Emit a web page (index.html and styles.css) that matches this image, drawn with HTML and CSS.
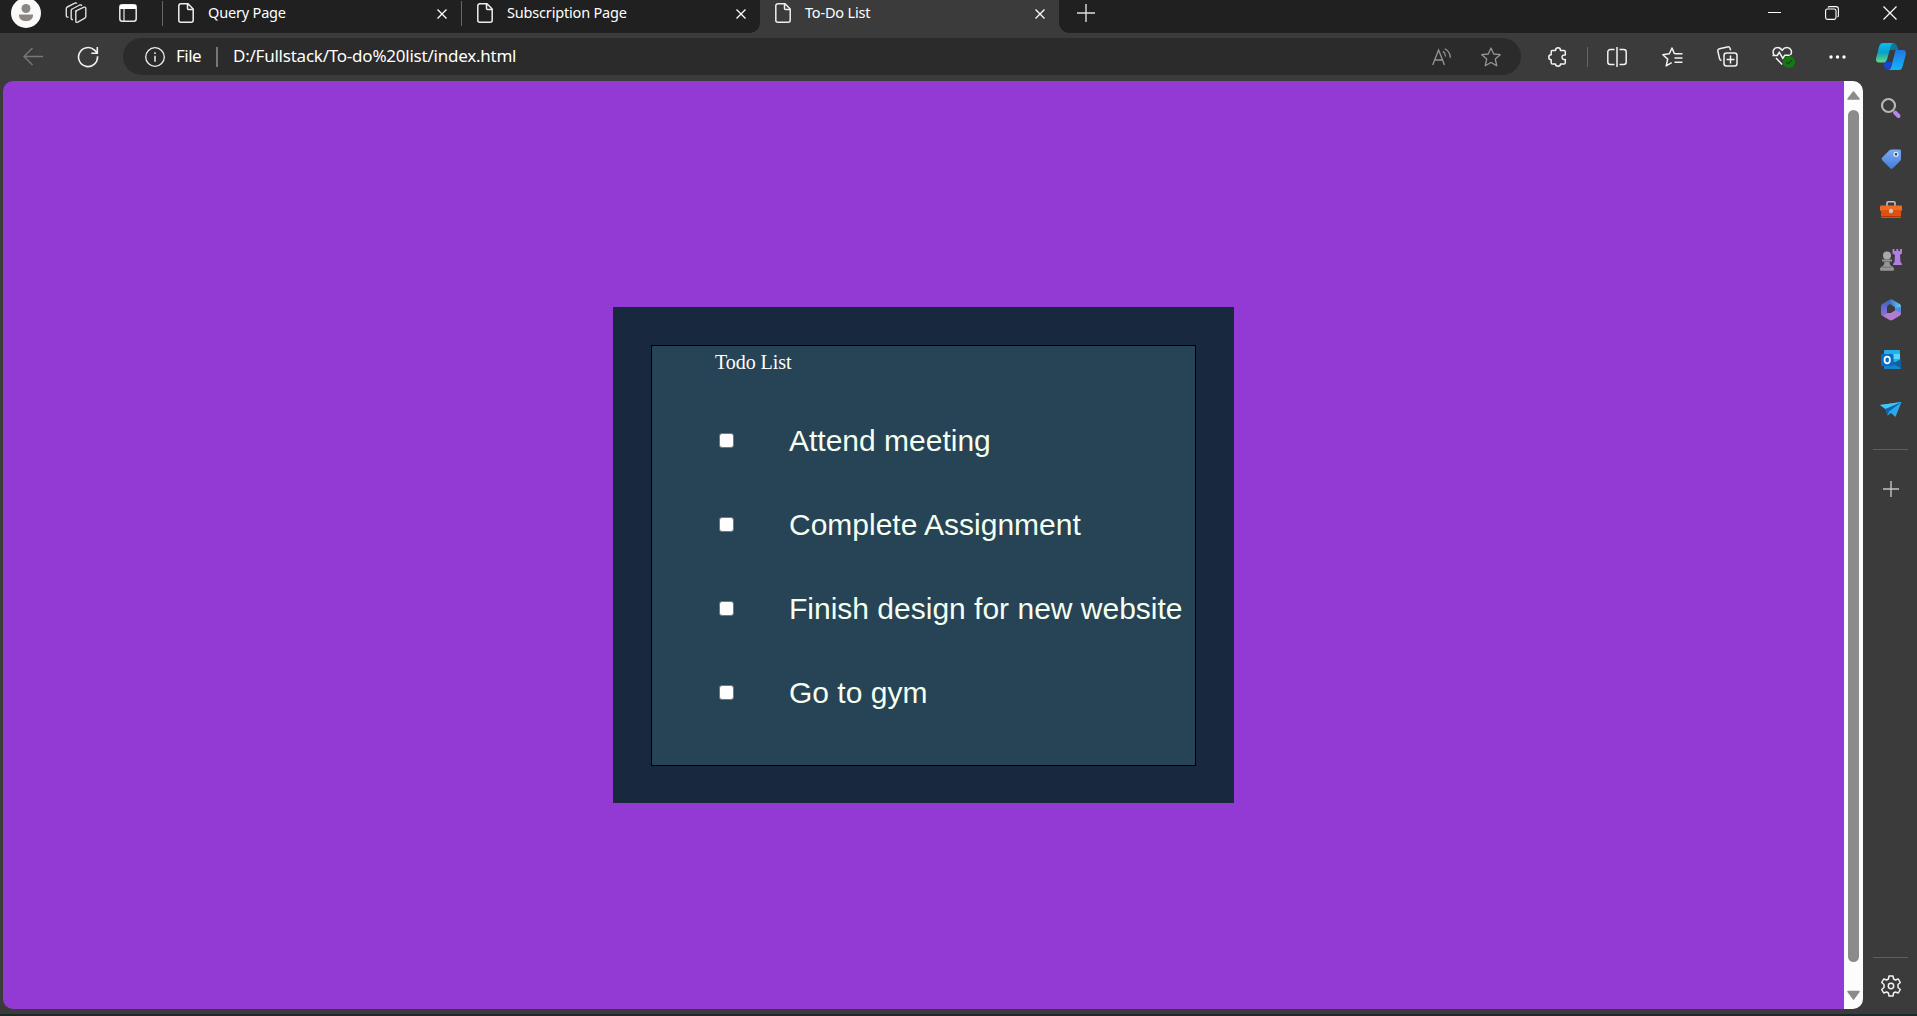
FILE: index.html
```html
<!DOCTYPE html>
<html lang="en">
<head>
<meta charset="utf-8">
<title>To-Do List</title>
<link rel="stylesheet" href="styles.css">
</head>
<body>
<div class="browser">
  <header class="tabbar">
    <svg class="avatar" width="30" height="30" viewBox="0 0 30 30"><circle cx="15" cy="15" r="15" fill="#fafafa"/><circle cx="15" cy="10.500" r="4.500" fill="#8b8682"/><path d="M8 16.500h14v1.200c0 3-3 5.300-7 5.300s-7-2.300-7-5.300z" fill="#8b8682"/></svg>
    <svg class="workspaces" width="22" height="22" viewBox="0 0 22 22" fill="none" stroke="#dedede" stroke-width="1.400" stroke-linejoin="round"><path d="M10.500 9.200 19 5.200q1.800-.5 1.800 1.200v8.200q0 1-1 1.500l-7 4q-2 .9-2-1v-8.600q0-.9.700-1.300z"/><path d="M8 17.500q-1.800.3-1.800-1.300V8.500q0-1 1-1.500l7.500-4q1.800-.6 1.900 1"/><path d="M3.500 15Q1.300 15.500 1.300 13.800V6.500q0-1 1-1.500l7.500-3.800q1.500-.5 1.900.6"/></svg>
    <svg class="tab-actions" width="18" height="18" viewBox="0 0 18 18"><rect x=".8" y=".8" width="16.400" height="16.400" rx="2.500" fill="none" stroke="#e8e8e8" stroke-width="1.500"/><path d="M1 1h16v4H1z" fill="#fff"/><path d="M5 5v12" stroke="#e8e8e8" stroke-width="1.200"/></svg>
    <i class="tab-line first"></i>
    <div class="tab">
      <svg class="doc" width="16" height="20" viewBox="0 0 16 20"><path d="M3 .8h7l5.200 5.200v11.200a2 2 0 0 1-2 2H2.800a2 2 0 0 1-2-2V2.800a2 2 0 0 1 2-2zM9.500 1v4.500q0 1 1 1H15"/></svg>
      <span class="tab-title">Query Page</span>
      <svg class="x" width="10" height="10" viewBox="0 0 10 10"><path d="M.5.500l9 9m0-9l-9 9"/></svg>
      <i class="tab-line"></i>
    </div>
    <div class="tab second">
      <svg class="doc" width="16" height="20" viewBox="0 0 16 20"><path d="M3 .8h7l5.200 5.200v11.200a2 2 0 0 1-2 2H2.800a2 2 0 0 1-2-2V2.800a2 2 0 0 1 2-2zM9.500 1v4.500q0 1 1 1H15"/></svg>
      <span class="tab-title">Subscription Page</span>
      <svg class="x" width="10" height="10" viewBox="0 0 10 10"><path d="M.5.500l9 9m0-9l-9 9"/></svg>
    </div>
    <div class="tab active">
      <svg class="doc" width="16" height="20" viewBox="0 0 16 20"><path d="M3 .8h7l5.200 5.200v11.200a2 2 0 0 1-2 2H2.800a2 2 0 0 1-2-2V2.800a2 2 0 0 1 2-2zM9.500 1v4.500q0 1 1 1H15"/></svg>
      <span class="tab-title">To-Do List</span>
      <svg class="x" width="10" height="10" viewBox="0 0 10 10"><path d="M.5.500l9 9m0-9l-9 9"/></svg>
    </div>
    <svg class="new-tab" width="18" height="18" viewBox="0 0 18 18"><path d="M0 9h18M9 0v18" stroke="#ddd" stroke-width="1.400"/></svg>
    <div class="window-controls">
      <svg width="13" height="13" viewBox="0 0 13 13"><path d="M0 6.500h13" stroke="#fff"/></svg>
      <svg width="14" height="14" viewBox="0 0 14 14" fill="none" stroke="#fff" stroke-width="1.100"><rect x=".6" y="3" width="10.400" height="10.400" rx="1.800"/><path d="M3 1.500Q3.500.600 4.500.600h6.500q2.400 0 2.400 2.400v6.500q0 1-.9 1.500"/></svg>
      <svg width="14" height="14" viewBox="0 0 14 14"><path d="M.5.500l13 13m0-13l-13 13" stroke="#fff" stroke-width="1.200"/></svg>
    </div>
  </header>

  <nav class="toolbar">
    <svg class="back" width="20" height="20" viewBox="0 0 20 20" fill="none" stroke="#777" stroke-width="1.400"><path d="M20 9.500H1M9.500 1 1 9.500l8.500 8.500"/></svg>
    <svg class="reload" width="22" height="22" viewBox="0 0 22 22" fill="none" stroke="#f2f2f2" stroke-width="1.600"><path d="M20.500 10.200a9.500 9.500 0 1 1-3-6.100l3 2.900M20.300 1v6.200h-6"/></svg>
    <div class="address">
      <svg width="20" height="20" viewBox="0 0 20 20" fill="none" stroke="#eee" stroke-width="1.300"><circle cx="10" cy="10" r="9.300"/><path d="M10 8.700v6M10 5.200v1.700" stroke-width="1.500"/></svg>
      <span class="scheme">File</span>
      <i class="url-line"></i>
      <span class="url">D:/Fullstack/To-do%20list/index.html</span>
      <svg class="read" width="20" height="18" viewBox="0 0 20 18" fill="none" stroke="#979797" stroke-width="1.300"><path d="M.7 17 6.600 2l5.900 15M2.800 12h7.700M11 3.200q2.500 2 2.500 5.300M12.800.7q5.500 3 5.500 9"/></svg>
      <svg class="star" width="20" height="20" viewBox="0 0 20 20" fill="none" stroke="#969696" stroke-width="1.300" stroke-linejoin="round"><path d="M10 1l2.700 6 6.500.7-4.900 4.400 1.500 6.700L10 15.500l-5.800 3.300 1.500-6.700L.8 7.700l6.500-.7z"/></svg>
    </div>
    <svg class="puzzle" width="19" height="20" viewBox="0 0 19 20" fill="none" stroke="#f2f2f2" stroke-width="1.500" stroke-linejoin="round"><path d="M4 3.500h3.500C7.500 2 8.200.8 10 .8s2.500 1.200 2.500 2.700H16q1.300 0 1.300 1.300V8c-2-.2-3.300.5-3.300 2.200s1.300 2.400 3.300 2.200v3.300q0 1.300-1.300 1.300h-3.500c0 1.400-.9 2.200-2.500 2.200S7.500 18.400 7.500 17H4.500q-1.300 0-1.300-1.300v-3C1.600 12.700.8 11.800.8 10.200s.8-2.500 2.400-2.500V4.800Q3.200 3.500 4 3.500z"/></svg>
    <i class="tool-line"></i>
    <svg class="split" width="20" height="20" viewBox="0 0 20 20" fill="none" stroke="#f2f2f2" stroke-width="1.500"><path d="M7.500 2.500H3.300A2.500 2.500 0 0 0 .8 5v10a2.500 2.500 0 0 0 2.500 2.500h4.200M12.500 2.500h4.200A2.500 2.500 0 0 1 19.200 5v10a2.500 2.500 0 0 1-2.500 2.500h-4.200M10 0v20"/></svg>
    <svg class="favs" width="21" height="20" viewBox="0 0 21 20" fill="none" stroke="#f2f2f2" stroke-width="1.500" stroke-linejoin="round"><path d="M13.500 6.700 12.300 6.500 10 1 7.300 6.800.8 7.700l4.900 4.400-1.500 6.700 5.500-3.100M13.500 6.700H20.500M12.500 11h8M12.500 15.300h8"/></svg>
    <svg class="collections" width="21" height="21" viewBox="0 0 21 21" fill="none" stroke="#f2f2f2" stroke-width="1.500"><rect x="7" y="7" width="13" height="13" rx="2.500"/><path d="M13.500 9.500v8M9.500 13.500h8M4.500 14.500q-1.500-.2-1.900-1.700L.9 5.300q-.4-2 1.500-2.500l8-1.900q2-.4 2.700 1.500l.5 2"/></svg>
    <svg class="health" width="23" height="22" viewBox="0 0 23 22"><path d="M2 9C-.2 5 2 1.600 5.500 1.600c2.300 0 3.800 1.400 4.700 2.700.9-1.300 2.400-2.700 4.700-2.700C18.500 1.600 20.800 5 18.500 9M.5 9.500h4.800l2-3.200 3.500 6 2-3h5M4 12l6.200 6.500" fill="none" stroke="#f2f2f2" stroke-width="1.500"/><circle cx="17" cy="16" r="6" fill="#107c10"/><path d="M14.300 16l2 2 3.700-4" fill="none" stroke="#263d25" stroke-width="1.200"/></svg>
    <svg class="dots" width="17" height="4" viewBox="0 0 17 4" fill="#fff"><circle cx="2" cy="2" r="1.700"/><circle cx="8.500" cy="2" r="1.700"/><circle cx="15" cy="2" r="1.700"/></svg>
    <svg class="copilot" width="30" height="27" viewBox="0 0 30 27">
      <defs><linearGradient id="ca" x2="0" y2="1"><stop stop-color="#09bdf4"/><stop offset=".5" stop-color="#0c9fc4"/><stop offset="1" stop-color="#62de7f"/></linearGradient><linearGradient id="cb" x2="0" y2="1"><stop stop-color="#2474e5"/><stop offset="1" stop-color="#12b5f8"/></linearGradient></defs>
      <path d="M7 19h9l-2 7.500H12c-3 0-4-3-5-7.500z" fill="#1746d0"/><path d="M15 0h2c3 0 4 2.500 5.500 7H14z" fill="#087b9c"/>
      <path d="M7 0h11c-2 0-3 1.500-3.500 4l-3 11c-.8 3-2 4.500-4.500 4.500H3c-2.500 0-3.500-1.500-2.800-4.500L3 4C3.700 1.500 5 0 7 0z" fill="url(#ca)"/>
      <path d="M20.500 7H27c2.500 0 3.300 2 2.700 5l-2.900 10.500C26.100 25.500 25 27 23 27H12c2 0 2.800-1.500 3.500-4l3-11.500C19.200 8.500 19 7 20.500 7z" fill="url(#cb)"/>
    </svg>
  </nav>

  <div class="body">
    <div class="viewport">
      <main class="page">
        <section class="card">
          <div class="panel">
            <div class="heading">Todo List</div>
            <label class="item"><input type="checkbox"><span>Attend meeting</span></label>
            <label class="item"><input type="checkbox"><span>Complete Assignment</span></label>
            <label class="item"><input type="checkbox"><span>Finish design for new website</span></label>
            <label class="item"><input type="checkbox"><span>Go to gym</span></label>
          </div>
        </section>
      </main>
      <div class="scrollbar">
        <svg width="13" height="9" viewBox="0 0 13 9"><path d="M6.500 1 12 8H1z" fill="#8b8b8b" stroke="#8b8b8b" stroke-width="1.500" stroke-linejoin="round"/></svg>
        <div class="thumb"></div>
        <svg width="13" height="10" viewBox="0 0 13 10"><path d="M6.500 9 12 1.500H1z" fill="#8b8b8b" stroke="#8b8b8b" stroke-width="1.500" stroke-linejoin="round"/></svg>
      </div>
    </div>
    <aside class="sidebar">
      <svg class="s1" width="22" height="22" viewBox="0 0 22 22"><circle cx="8.500" cy="8.500" r="6.500" fill="none" stroke="#b9b6b3" stroke-width="2.200"/><path d="M15 15.500l3.500 3.500" stroke="#bb83ee" stroke-width="4" stroke-linecap="round"/></svg>
      <svg class="s2" width="22" height="22" viewBox="0 0 22 22"><defs><linearGradient id="tg" x2="0" y2="1"><stop stop-color="#78abf3"/><stop offset="1" stop-color="#477cd9"/></linearGradient></defs><path d="M11.500 1.500h8q1.500 0 1.500 1.500v8q0 1-.7 1.700l-7.500 7.500q-1.300 1.300-2.600 0l-8-8q-1.300-1.300 0-2.600l7.500-7.500q.8-.6 1.800-.6z" fill="url(#tg)"/><circle cx="16" cy="6.300" r="1.900" fill="#293b58" stroke="#dceaff" stroke-width="1.300"/></svg>
      <svg class="s3" width="22" height="22" viewBox="0 0 22 22"><path d="M7 7V4q0-1.200 1.200-1.200h5.600Q15 2.800 15 4v3" fill="none" stroke="#bfc3c5" stroke-width="1.600"/><rect y="6.500" width="22" height="5.500" rx="1" fill="#f36a25"/><path d="M1 11h20v7q0 1-1 1H2q-1 0-1-1z" fill="#e2500f"/><path d="M1 17.500h20" stroke="#b53605"/><circle cx="11" cy="12" r="2.200" fill="#c4c7c8"/></svg>
      <svg class="s4" width="22" height="22" viewBox="0 0 22 22"><path d="M12.500 0h2v2h1.800V0h2v2h1.700V0h2v4.500l-2 1.500.5 7q1.500 1 1.500 3h-9q0-2 1.500-3l.5-7-2.500-1.500z" fill="#b07ee2"/><circle cx="7" cy="6.500" r="4" fill="#a9a9a9"/><path d="M2 10.500h10v2H9.500q0 3 1.500 4.500 3 .8 3 3.500 0 1.200-1 1.200H1q-1 0-1-1.200Q0 18 3 17q1.500-1.500 1.500-4.500H2z" fill="#959595"/><path d="M4 12.500h6M2 18.200h10" stroke="#737373"/></svg>
      <svg class="s5" width="22" height="22" viewBox="0 0 22 22"><defs><linearGradient id="ma" x2="0" y2="1"><stop stop-color="#3f63bf"/><stop offset="1" stop-color="#8d70dd"/></linearGradient><linearGradient id="mb" x2="1"><stop stop-color="#4070c4"/><stop offset="1" stop-color="#63cdf8"/></linearGradient></defs><path d="M9.500.8 2.300 5.100Q1 6 1 7.500v7q0 1.500 1.200 2.200L7 14V8q0-1.200 1-1.800l5-3z" fill="url(#ma)"/><path d="M9.500.8q1.500-.9 3 0l7.200 4.300Q21 6 21 7.500v7L15 11V9q0-1-1-1.600L9.500 4.500z" fill="url(#mb)"/><path d="M2.200 16.700 7 14h3.500l7.500-4.500 3 2v3q0 1.500-1.300 2.200l-7.200 4.400q-1.500.9-3 0z" fill="#b47bd0"/><path d="M15 9.500l6-2v5q0 1.500-1.500 1L15 11z" fill="#4b8be0"/><path d="M10.500 6.800 14 8.500q1 .6 1 1.700v1L10.500 14H7.500V8.500z" fill="#3b3b3b"/></svg>
      <svg class="s6" width="22" height="22" viewBox="0 0 22 22"><path d="M5 1h14q1 0 1 1v11H4V2q0-1 1-1z" fill="#25aee8"/><path d="M12 5h8v5h-8z" fill="#50d9ff"/><path d="M4 10l8 5 9-5v9q0 1-1 1H5q-1 0-1-1z" fill="#1684cd"/><path d="M13 15l8-5v9z" fill="#105e9f"/><rect x="1" y="5" width="12.500" height="12" rx="1" fill="#086bc4"/><ellipse cx="7.200" cy="11" rx="2.700" ry="3.300" fill="none" stroke="#fff" stroke-width="1.700"/></svg>
      <svg class="s7" width="22" height="22" viewBox="0 0 22 22"><path d="M0 6 21.500 3 15.500 18 11 14 7.500 16.500 5.500 10z" fill="#28a9e9"/><path d="M0 6 21.500 3 5.500 10z" fill="#44c5f4"/><path d="M5.500 10 21.500 3 9 12.500 7.500 16.500z" fill="#0865b2"/></svg>
      <hr>
      <svg class="add" width="16" height="16" viewBox="0 0 16 16"><path d="M0 8h16M8 0v16" stroke="#c4c4c4" stroke-width="1.400"/></svg>
      <hr class="bottom">
      <svg class="gear" width="22" height="22" viewBox="0 0 22 22" fill="none" stroke="#f2f2f2" stroke-width="1.500" stroke-linejoin="round"><path d="M9 1h4l.6 3 1.800 1 2.900-1 2 3.500-2.300 2v3l2.300 2-2 3.500-2.900-1-1.800 1-.6 3H9l-.6-3-1.800-1-2.900 1-2-3.500 2.300-2v-3l-2.300-2 2-3.500 2.900 1 1.800-1z"/><circle cx="11" cy="11" r="2.700"/></svg>
    </aside>
  </div>
</div>
</body>
</html>
```

FILE: styles.css
```css
* { box-sizing: border-box; }
body { margin: 0; background: #3b3b3b; color: #fff; font-family: "Noto Sans", "Open Sans", sans-serif; overflow: hidden; }
svg { display: block; flex: none; }
i { display: block; flex: none; }
.browser { display: flex; flex-direction: column; width: 1917px; height: 1016px; border-bottom: 2px solid #1b292d; }

.tabbar { display: flex; height: 33px; background: #202020; overflow: hidden; }
.avatar { margin: -2px 0 0 11px; }
.workspaces { margin: 2px 0 0 24px; }
.tab-actions { margin: 4px 0 0 32px; }
.tab-line { width: 1px; height: 25px; margin-top: 1px; background: #666; }
.tab-line.first { margin-left: 25px; }
.tab { display: flex; width: 299px; height: 33px; padding-left: 15px; flex: none; }
.tab.second { width: 298px; }
.doc { margin-top: 3px; fill: none; stroke: #eee; stroke-width: 1.5; }
.tab-title { margin-left: 14px; height: 25px; font-size: 14.5px; line-height: 25px; letter-spacing: -.18px; white-space: nowrap; }
.tab .x { margin: 9px 14px 0 auto; stroke: #fff; stroke-width: 1.3; }
.tab.active { position: relative; background: #3b3b3b; }
.tab.active::before, .tab.active::after { content: ""; position: absolute; bottom: 0; width: 10px; height: 10px; }
.tab.active::before { left: -10px; background: radial-gradient(circle at 0 0, #202020 9.5px, #3b3b3b 10px); }
.tab.active::after { right: -10px; background: radial-gradient(circle at 100% 0, #202020 9.5px, #3b3b3b 10px); }
.new-tab { margin: 4px 0 0 18px; }
.window-controls { display: flex; gap: 44px; margin: 6px 20px 0 auto; }

.toolbar { display: flex; align-items: center; height: 48px; padding: 0 0 1px 23px; }
.toolbar > * { flex: none; }
.reload { margin-left: 34px; }
.address { display: flex; align-items: center; width: 1398px; height: 37px; margin-left: 24px; padding: 0 20px 0 22px; border-radius: 19px; background: #2b2b2b; font-size: 17px; }
.scheme, .url { height: 25px; line-height: 23px; }
.scheme { width: 40px; margin-left: 11px; letter-spacing: -.5px; }
.url-line { width: 2px; height: 20px; background: #777; }
.url { margin-left: 15px; letter-spacing: -.23px; white-space: nowrap; }
.read { margin-left: auto; }
.star { margin-left: 29px; }
.puzzle { margin-left: 27px; }
.tool-line { width: 1px; height: 20px; margin-left: 20px; background: #666; }
.split { margin-left: 19px; }
.favs { margin-left: 35px; }
.collections { margin-left: 34px; }
.health { margin-left: 34px; }
.dots { margin-left: 34px; }
.copilot { margin-left: 30px; }

.body { display: flex; height: 933px; }
.viewport { display: flex; width: 1860px; height: 928px; margin-left: 3px; border-radius: 10px; overflow: hidden; flex: none; }
.page { display: flex; align-items: flex-start; justify-content: center; width: 1841px; padding-top: 226px; background: #9339d4; }
.card { width: 621px; height: 496px; padding: 38px; background: #17283f; }
.panel { width: 545px; height: 421px; padding-left: 63px; border: 1px solid #000; background: #274356; color: #fff; }
.heading { height: 52px; padding-top: 5px; font: 20px/23px "Liberation Serif", serif; color: #fffffa; letter-spacing: -.05px; }
.item { display: flex; align-items: center; height: 84px; font: 30px/34px "Liberation Sans", sans-serif; color: #f5fff0; white-space: nowrap; }
.item span { padding-top: 2px; }
.item input { appearance: none; width: 15px; height: 15px; margin: 0 55px 0 4px; border: 1px solid #767676; border-radius: 3px; background: #fff; }
.scrollbar { display: flex; flex-direction: column; align-items: center; width: 19px; padding: 10px 0 8px; background: #fcfcfc; }
.thumb { width: 11px; height: 852px; margin: 10px 0 28px; border-radius: 6px; background: #8b8b8b; }
.sidebar { display: flex; flex-direction: column; align-items: center; width: 54px; padding: 16px 0 0 1px; }
.s2, .s3 { margin-top: 29px; }
.s4, .s5, .s6, .s7 { margin-top: 28px; }
hr { width: 35px; height: 1px; margin: 28px 0 0; border: 0; background: #5f5f5f; flex: none; }
.add { margin-top: 31px; }
hr.bottom { margin-top: auto; }
.gear { margin: 17px 0 17px; }
```
